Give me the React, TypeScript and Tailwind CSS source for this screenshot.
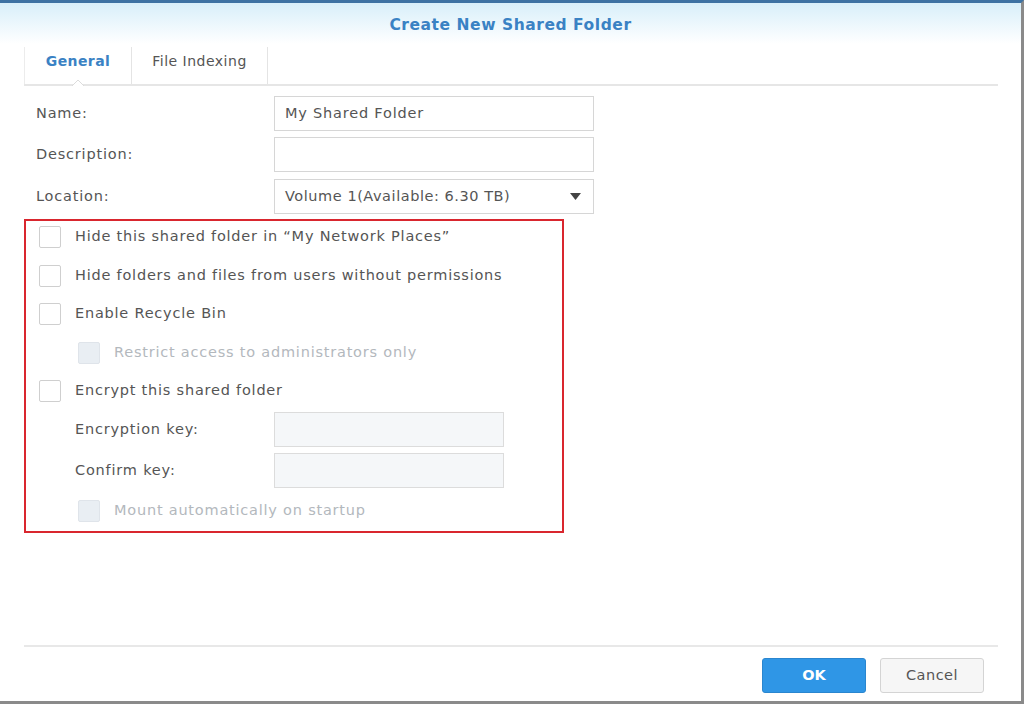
import React from "react";

const font = { fontFamily: '"DejaVu Sans", Verdana, sans-serif' };

const Checkbox = ({ disabled = false }: { disabled?: boolean }) => (
  <span
    className={
      disabled
        ? "inline-block w-[22px] h-[22px] rounded-[2px] border border-[#dfe4ea] bg-[#e9eef3] shrink-0"
        : "inline-block w-[22px] h-[22px] rounded-[2px] border border-[#cfcfcf] bg-white shrink-0"
    }
  />
);

const CheckRow = ({
  label,
  disabled = false,
  indent = false,
  className = "",
}: {
  label: string;
  disabled?: boolean;
  indent?: boolean;
  className?: string;
}) => (
  <div className={`flex items-center h-[24px] ${indent ? "pl-[39px]" : ""} ${className}`}>
    <Checkbox disabled={disabled} />
    <span
      className={`ml-[14px] text-[14.5px] tracking-[0.78px] ${disabled ? "text-[#b3b8bd]" : "text-[#555]"}`}
    >
      {label}
    </span>
  </div>
);

const FieldRow = ({
  label,
  children,
  className = "",
}: {
  label: string;
  children: React.ReactNode;
  className?: string;
}) => (
  <div className={`flex items-center h-[35px] ${className}`}>
    <span className="w-[238px] text-[14.5px] tracking-[0.8px] text-[#555]">{label}</span>
    {children}
  </div>
);

export default function App() {
  return (
    <div
      className="w-[1024px] h-[704px] bg-white border-t-[3px] border-t-[#3d72a3] border-r-[3px] border-r-[#8a8a8a] border-b-[3px] border-b-[#8a8a8a] flex flex-col overflow-hidden"
      style={font}
    >
      {/* title bar */}
      <div className="h-[41px] shrink-0 bg-gradient-to-b from-[#d8effa] to-white flex items-center justify-center pt-[4px]">
        <span className="text-[15.5px] font-bold text-[#3a82c4] tracking-[0.55px]">
          Create New Shared Folder
        </span>
      </div>

      {/* tabs */}
      <div className="mx-[24px] mr-[23px] h-[42px] shrink-0 flex border-b-2 border-[#e6e6e6]">
        <div className="relative w-[108px] flex items-center justify-center border-l border-[#ececec] border-r border-r-[#e4e4e4] mt-[3px]">
          <span className="text-[14px] font-bold text-[#3a82c4] tracking-[0.4px] -mt-[8px]">General</span>
          <span className="absolute bottom-[-2px] left-[47px] w-[12px] h-[6px]">
            <svg width="12" height="6" viewBox="0 0 12 6">
              <path d="M0 6 L6 0 L12 6" fill="white" stroke="#dcdcdc" strokeWidth="1" />
            </svg>
          </span>
        </div>
        <div className="w-[136px] flex items-center justify-center border-r border-[#e4e4e4] mt-[3px]">
          <span className="text-[14px] text-[#555] tracking-[0.5px] -mt-[8px]">File Indexing</span>
        </div>
      </div>

      {/* form */}
      <div className="flex-1 flex flex-col pl-[36px] pt-[10px]">
        <FieldRow label="Name:">
          <div className="w-[320px] h-[35px] border border-[#d6d6d6] bg-white flex items-center px-[10px] text-[14.5px] tracking-[0.8px] text-[#555]">
            My Shared Folder
          </div>
        </FieldRow>
        <FieldRow label="Description:" className="mt-[6px]">
          <div className="w-[320px] h-[35px] border border-[#d6d6d6] bg-white" />
        </FieldRow>
        <FieldRow label="Location:" className="mt-[7px]">
          <div className="w-[320px] h-[35px] border border-[#d6d6d6] bg-white flex items-center justify-between pl-[10px] pr-[12px] text-[14.5px] tracking-[0.55px] text-[#555]">
            <span>Volume 1(Available: 6.30 TB)</span>
            <svg width="11" height="7" viewBox="0 0 11 7">
              <path d="M0 0 H11 L5.5 7 Z" fill="#444" />
            </svg>
          </div>
        </FieldRow>

        <div className="-ml-[12px] mt-[5px] w-[540px] h-[314px] border-2 border-[#d9262e] pl-[13px] pt-[4px] flex flex-col">
          <CheckRow label={"Hide this shared folder in \u201cMy Network Places\u201d"} />
          <CheckRow label="Hide folders and files from users without permissions" className="mt-[14.5px]" />
          <CheckRow label="Enable Recycle Bin" className="mt-[14.5px]" />
          <CheckRow label="Restrict access to administrators only" disabled indent className="mt-[14.5px]" />
          <CheckRow label="Encrypt this shared folder" className="mt-[14.5px]" />
          <div className="flex items-center h-[35px] mt-[9px] pl-[36px]">
            <span className="w-[199px] text-[14.5px] tracking-[0.8px] text-[#555]">Encryption key:</span>
            <div className="w-[230px] h-[35px] border border-[#dcdcdc] bg-[#f5f7f9]" />
          </div>
          <div className="flex items-center h-[35px] mt-[6px] pl-[36px]">
            <span className="w-[199px] text-[14.5px] tracking-[0.8px] text-[#555]">Confirm key:</span>
            <div className="w-[230px] h-[35px] border border-[#dcdcdc] bg-[#f5f7f9]" />
          </div>
          <CheckRow label="Mount automatically on startup" disabled indent className="mt-[11px]" />
        </div>
      </div>

      {/* footer */}
      <div className="shrink-0 mx-[24px] mr-[23px] border-t-2 border-[#e8e8e8] h-[56px] flex items-start justify-end pt-[11px] pr-[14px] gap-[14px]">
        <button className="w-[104px] h-[35px] rounded-[3px] bg-[#2f96e6] border border-[#2a86cf] text-white font-bold text-[14.5px]">
          OK
        </button>
        <button className="w-[104px] h-[35px] rounded-[3px] bg-[#f6f6f6] border border-[#d4d4d4] text-[#555] text-[14.5px] tracking-[0.5px]">
          Cancel
        </button>
      </div>
    </div>
  );
}
